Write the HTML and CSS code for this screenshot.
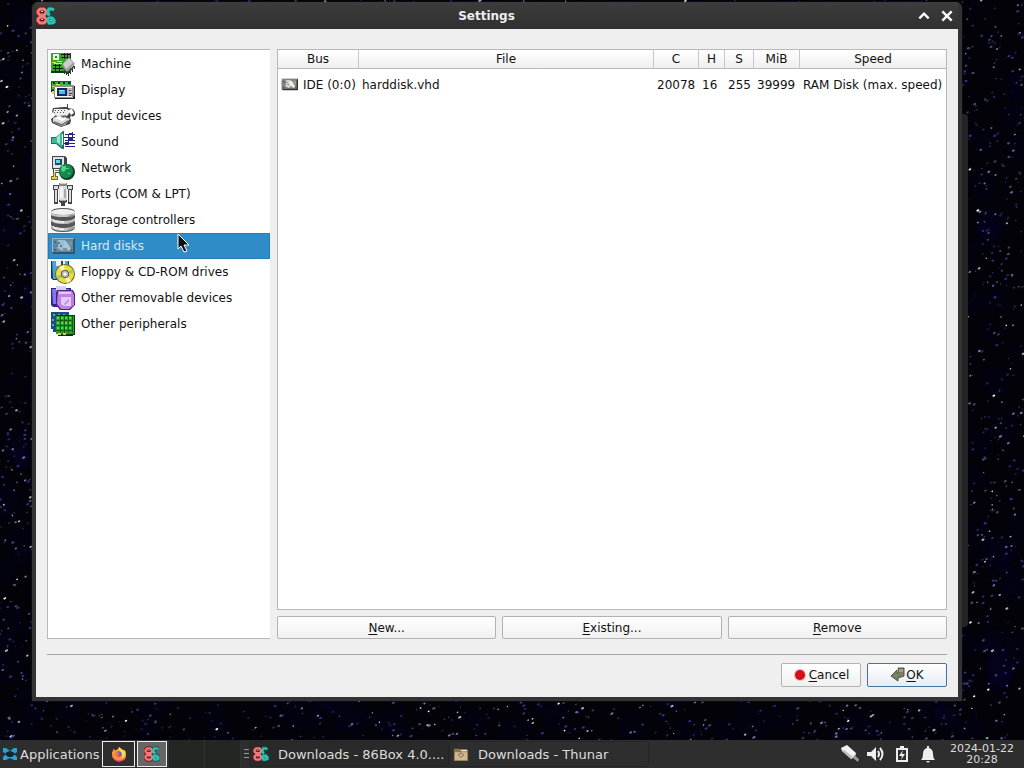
FILE: index.html
```html
<!DOCTYPE html>
<html lang="en">
<head>
  <meta charset="utf-8">
  <title>Settings</title>
  <link rel="stylesheet" href="styles.css">
</head>
<body>
  <!-- Shared icons -->
  <svg class="sprite" aria-hidden="true">
    <symbol id="icon-86box" viewBox="0 0 20 20">
      <g fill="none">
        <g stroke="#6e1218" stroke-width="5"><path d="M4 3h4l2 2v2L8 9H4L2 7V5zM4 11h4l2 2v2l-2 2H4l-2-2v-2z"/></g>
        <g stroke="#0b514e" stroke-width="5"><path d="M18 4l-2-1h-3l-2 2v3l3 1M13 12h3l2 2v2l-2 1h-3l-1-2v-2z"/></g>
        <g stroke="#f27a78" stroke-width="3"><path d="M4 3h4l2 2v2L8 9H4L2 7V5zM4 11h4l2 2v2l-2 2H4l-2-2v-2z"/></g>
        <g stroke="#2cc3b5" stroke-width="3"><path d="M18 4l-2-1h-3l-1 2v3l2 1M13 12h3l2 2v2l-2 1h-3l-1-2v-2z"/></g>
      </g>
      <path fill="#4b1218" d="M5 5h3v2H5zM5 13h3v2H5z"/>
      <path fill="#b5dfb3" d="M5 5h2v1H5zM5 13h2v1H5zM14 14h2v1h-2z"/>
    </symbol>
    <symbol id="icon-disk" viewBox="0 0 24 24">
      <path fill="#333" d="M1 4h23v16H2v-1H1z"/>
      <path fill="#d4d4d4" d="M1 4h22v1H2v13H1z"/>
      <path fill="#858585" d="M2 5h20v13H2z"/>
      <path fill="#555" d="M3 7h2v2H3zM3 15h2v2H3zM19 15h2v2h-2z"/>
      <path fill="#dedede" d="M7 6h7l2 3-1 5-4 3-5-3V9z"/>
      <path fill="#77756a" d="M6 8h3v2H7v3H6zM9 11h2v2H9z"/>
      <path fill="#efefef" d="M13 7l3 1 4 7-2 2-5-4z"/>
      <path fill="#a89e7e" d="M12 14h4v3h-4zM17 7h4v5h-2z"/>
    </symbol>
  </svg>

  <div class="desktop">
    <main class="workspace">
      <canvas class="stars" id="stars"></canvas>
      <div class="back-window"></div>

      <section class="window">
        <header class="titlebar">
          <svg class="title-logo"><use href="#icon-86box"/></svg>
          <h1 class="title">Settings</h1>
          <button class="title-button" aria-label="Shade"><svg viewBox="0 0 12 12"><path d="M2 8l4-4 4 4" fill="none" stroke="#fff" stroke-width="2"/></svg></button>
          <button class="title-button" aria-label="Close"><svg viewBox="0 0 12 12"><path d="M2 2l8 8M10 2l-8 8" fill="none" stroke="#fff" stroke-width="2"/></svg></button>
        </header>

        <div class="window-body">
          <div class="panes">
            <nav class="categories">
              <button class="category">
                <svg viewBox="0 0 24 24"><path fill="#123f10" d="M0 1h20v20H0z"/><path fill="#39a52f" d="M0 1h19v18H0z"/><path fill="#e8f5d8" d="M2 2h6v6H2z"/><path fill="#258a42" d="M4 4h2v2H4z"/><path fill="#102010" d="M10 2h9v1h-9zM10 5h9v1h-9zM13 1h1v6h-1zM16 1h1v6h-1zM2 13h8v1H2zM2 16h10v1H2zM4 12h1v8H4zM8 12h1v8H8z"/><path fill="#e8e430" d="M1 10h4v1H1zM6 9h5v1H6zM3 11h8v1H3z"/><path fill="#333" d="M11 15l1 1 4 5 1-1 6-7v2l-6 7-2-1zM13 18h1v4h-1zM15 20h1v3h-1zM17 20h1v4h-1zM19 18h1v4h-1zM21 16h1v4h-1zM23 14h1v3h-1z"/><path fill="#9b9b9b" d="M11 13l7-8 6 7-8 8z"/><path fill="#cdcdcd" d="M12 12l6-6 4 5-7 6z"/></svg>
                Machine
              </button>
              <button class="category">
                <svg viewBox="0 0 24 24"><path fill="#176622" d="M0 3h20v10H0z"/><path fill="#36b53d" d="M1 4h18v7H1z"/><path fill="#123" d="M2 4h2v2H2zM7 4h2v2H7zM12 4h2v2h-2zM17 4h2v2h-2zM0 12h4v2H0z"/><path fill="#e4df38" d="M1 8h4v1H1zM5 6h4v1H5zM1 13h2v3H1z"/><path fill="#222" d="M4 20h18v-2h1V8h1v13H4z"/><path fill="#909090" d="M3 9l2-2h18v11l-2 2H3z"/><path fill="#fafafa" d="M4 9h17v10H4z"/><path fill="#b8b8b8" d="M6 10h15v8H6z"/><path fill="#112b62" d="M6 10h10v8H6z"/><path fill="#4db9ef" d="M8 12h6v4H8z"/><path fill="#99e8ff" d="M8 12h5v1H8z"/><path fill="#a22" d="M18 12h2v1h-2z"/><path fill="#444" d="M18 15h3v1h-3zM18 17h2v1h-2z"/></svg>
                Display
              </button>
              <button class="category">
                <svg viewBox="0 0 24 24"><path fill="#444" d="M2 4l11-1h3V0h1v4l5 1 2 3v3l-3 2-1-2-1 3 1 2-1 4-9 3-9-4-1-4 5-4-4-3z"/><path fill="#eee" d="M3 5h13l3 3-3 4H6L2 9z"/><path fill="#555" d="M4 6h1v1H4zM7 6h1v1H7zM10 6h1v1h-1zM13 6h1v1h-1zM3 8h1v1H3zM6 8h1v1H6zM9 8h1v1H9zM12 8h1v1h-1z"/><path fill="#ddd" d="M2 14l7-3 10 4-5 6-4 1-8-4z"/><path fill="#fff" d="M4 14l5-2 6 3-4 2zM17 6l4-1 2 4-3 2z"/><path fill="#777" d="M3 17l8 3 6-4v2l-6 4-8-3zM9 12l5-1 2 1-4 2z"/></svg>
                Input devices
              </button>
              <button class="category">
                <svg viewBox="0 0 24 24"><path fill="#246c69" d="M0 7h5l7-6h1v18h-2l-6-5H0z"/><path fill="#3db991" d="M1 8h4l6-6v15l-6-4H1z"/><path fill="#9beacb" d="M2 8h3l4-4v10l-3-2V8z"/><path fill="#fff" d="M11 4h1v11h-1z"/><path fill="#23238b" d="M14 4h10v1H14zM13 7h11v1H13zM14 10h10v1H14zM13 13h11v1H13zM14 16h10v1H14zM17 4h1v9h-1zM18 3h4v2h-4zM21 2h1v8h-1zM14 12h4v3h-4zM18 8h4v3h-4z"/></svg>
                Sound
              </button>
              <button class="category">
                <svg viewBox="0 0 24 24"><path fill="#444" d="M1 0h13l2 2v11h-2v4H2v-4H1z"/><path fill="#e2e2e2" d="M2 1h11v11H2z"/><path fill="#164e64" d="M4 3h7v6H4z"/><path fill="#66d5dd" d="M5 4h4v3H5z"/><path fill="#f7f7f7" d="M3 13h11v3H3z"/><path fill="#777" d="M4 14h7v1H4z"/><path fill="#77712b" d="M2 16h3v4h2v4H0v-4h2z"/><path fill="#dcd455" d="M3 16h1v5h2v2H1v-2h2z"/><circle cx="16" cy="16" r="8" fill="#113f26"/><circle cx="15" cy="15" r="7" fill="#168a4e"/><path fill="#51d389" d="M11 10h4v2h3v1h-3l-1 2-2 1-2-2zM17 17h2v1h-2z"/></svg>
                Network
              </button>
              <button class="category">
                <svg viewBox="0 0 24 24"><path fill="#444" d="M2 3h20v5h-1v14h-4V7h-1v13l-2 1v3h-4v-3l-2-1V7H7v15H3V8H2z"/><path fill="#ddd" d="M3 4h4v3H3zM17 4h4v3h-4zM4 8h2v12H4zM18 8h2v12h-2zM8 4h8v14H8z"/><path fill="#888" d="M8 1h8v3H8z"/><path fill="#e2d863" d="M9 1h6v1H9z"/><path fill="#f4f4f4" d="M9 5h3v11H9z"/><path fill="#a8a8a8" d="M13 7h2v9h-2zM9 18h6v1H9z"/></svg>
                Ports (COM &amp; LPT)
              </button>
              <button class="category">
                <svg viewBox="0 0 24 24"><path fill="#555" d="M0 4q0-4 12-4t12 4v15q0 5-12 5T0 19z"/><path fill="#c6c6c6" d="M0 4v3q3 2 12 2t12-2V4q-2 3-12 3T0 4zM0 10v3q3 3 12 3t12-3v-3q-3 3-12 3T0 10zM0 17v2q3 4 12 4t12-4v-2q-3 3-12 3T0 17z"/><ellipse cx="12" cy="4" rx="12" ry="3" fill="#f1f1f1"/><path fill="#e8e8e8" d="M2 11q4 2 11 2v2q-8 0-11-2zM2 18q4 2 11 2v2q-8 0-11-2z"/><path fill="#909090" d="M17 8l6-2v2l-6 1zM17 15l6-2v1l-6 2zM17 21l6-2v1l-6 2z"/></svg>
                Storage controllers
              </button>
              <button class="category selected">
                <svg class="tinted"><use href="#icon-disk"/></svg>
                Hard disks
              </button>
              <button class="category">
                <svg viewBox="0 0 24 24"><path fill="#17365b" d="M0 1h18v19H2l-2-2z"/><path fill="#4aa2db" d="M1 1h16v18H2z"/><path fill="#eee" d="M5 0h9v6H5z"/><path fill="#345" d="M10 1h2v4h-2z"/><circle cx="14" cy="14" r="10" fill="#6c681e"/><circle cx="14" cy="14" r="9" fill="#eadd42"/><path fill="#fff8be" d="M14 14l-6-7 5-2zM14 14l6 7-4 2z"/><path fill="#a7c95b" d="M14 14l-9 2 2 4zM14 14l8-5 1 4z"/><circle cx="14" cy="14" r="4" fill="#555"/><circle cx="14" cy="14" r="3" fill="#ccc"/><path fill="#fff" d="M13 13h2v2h-2z"/></svg>
                Floppy &amp; CD-ROM drives
              </button>
              <button class="category">
                <svg viewBox="0 0 24 24"><path fill="#32209b" d="M0 2h20v19H2l-2-2z"/><path fill="#7d77f2" d="M1 3h17v15H2z"/><path fill="#d5d5f3" d="M5 0h10v6H5z"/><path fill="#51246d" d="M6 4h16l2 4v11l-5 5H9l-4-5V6z"/><path fill="#bd82e5" d="M7 5h14l2 4v10l-5 4h-8l-4-5z"/><path fill="#e8c6fa" d="M8 6h12v2H8zM10 11h10v9h-7l-3-2z"/><path fill="#b583dc" d="M13 18l5-5v2l-4 4zM20 9h2v9h-2z"/></svg>
                Other removable devices
              </button>
              <button class="category">
                <svg viewBox="0 0 24 24"><path fill="#1b4e7d" d="M0 0h18v20H2v-3H0z"/><path fill="#62a0bd" d="M2 2h2v2H2zM7 2h2v2H7zM12 2h2v2h-2zM1 7h2v2H1zM1 12h2v2H1z"/><path fill="#102f0d" d="M5 3h19v20h-2v1H7v-2H5z"/><path fill="#24a326" d="M5 4h18v18H5z"/><path fill="#5fd44a" d="M6 5h2v2H6zM10 5h2v2h-2zM14 5h2v2h-2zM18 5h2v2h-2zM6 10h2v2H6zM10 10h2v2h-2zM14 10h2v2h-2zM18 10h2v2h-2zM6 15h2v2H6zM10 15h2v2h-2zM14 15h2v2h-2zM18 15h2v2h-2z"/><path fill="#145c17" d="M5 8h17v1H5zM5 13h17v1H5zM5 18h17v1H5zM9 4h1v17H9zM13 4h1v17h-1zM17 4h1v17h-1zM21 4h1v17h-1z"/><path fill="#d7d53c" d="M7 21h3v2H7zM12 21h3v2h-3z"/></svg>
                Other peripherals
              </button>
            </nav>

            <div class="details">
              <div class="disk-view">
                <table class="disk-table">
                  <colgroup>
                    <col class="col-bus"><col><col class="col-c"><col class="col-h"><col class="col-s"><col class="col-mib"><col class="col-speed">
                  </colgroup>
                  <thead>
                    <tr><th>Bus</th><th>File</th><th>C</th><th>H</th><th>S</th><th>MiB</th><th>Speed</th></tr>
                  </thead>
                  <tbody>
                    <tr>
                      <td><span class="bus"><svg class="bus-icon"><use href="#icon-disk"/></svg>IDE (0:0)</span></td>
                      <td>harddisk.vhd</td>
                      <td>20078</td>
                      <td>16</td>
                      <td>255</td>
                      <td>39999</td>
                      <td>RAM Disk (max. speed)</td>
                    </tr>
                  </tbody>
                </table>
              </div>
              <div class="actions">
                <button class="button"><span><u>N</u>ew...</span></button>
                <button class="button"><span><u>E</u>xisting...</span></button>
                <button class="button"><span><u>R</u>emove</span></button>
              </div>
            </div>
          </div>

          <footer class="dialog-buttons">
            <button class="button"><svg class="cancel-icon" viewBox="0 0 14 14"><circle cx="7" cy="7" r="6" fill="#f4b5b5"/><circle cx="7" cy="7" r="5" fill="#d40f17"/></svg><span><u>C</u>ancel</span></button>
            <button class="button default"><svg class="ok-icon" viewBox="0 0 16 16"><path d="M8 1h6v8l-6 2v3L1 9l6-6v3h2z" fill="#7c8063" stroke="#4d523e"/><path d="M9 2h4v3H9z" fill="#a1a589"/></svg><span><u>O</u>K</span></button>
          </footer>
        </div>
      </section>

      <svg class="pointer" viewBox="0 0 12 20"><path d="M1 1v15l3-3 3 6 3-1-3-6h5z" fill="#111" stroke="#fff"/></svg>
    </main>

    <footer class="taskbar">
      <button class="menu-button">
        <svg viewBox="0 0 16 16"><path fill="#2d9fd0" d="M1 2h3l4 3 4-3h3v4l-3 2 3 3v3h-3l-4-2-4 2H1v-3l3-3-3-2z"/><path fill="#10252e" d="M5 6l3-1 3 1 2 2-3 3H6L3 8z"/></svg>
        Applications
      </button>
      <button class="launcher" aria-label="Firefox"><svg viewBox="0 0 18 18"><path d="M1 8L3 3l2 2 3-2 1-2 4 3 3 1 1 5q0 7-8 7T1 8z" fill="#ff9a32"/><path d="M1 8q1 8 8 8 6 0 8-5-1 6-8 7Q1 17 1 8z" fill="#f6436b"/><path d="M9 1l4 4 3 1q1 7-4 8 2-4-1-7Q8 5 9 1z" fill="#ffde52"/><circle cx="9" cy="9" r="3" fill="#7059c9"/><path d="M4 8l4-1 2 2-3 1 3 3q-5 1-6-5z" fill="#ff7241"/></svg></button>
      <button class="launcher active" aria-label="86Box"><svg><use href="#icon-86box"/></svg></button>
      <div class="pager"><span></span><span></span></div>
      <div class="handle"></div>
      <button class="task current"><svg><use href="#icon-86box"/></svg><span>Downloads - 86Box 4.0....</span></button>
      <button class="task"><svg viewBox="0 0 18 18"><path fill="#8f7452" d="M1 3h7l2 2h7v12H1z"/><path fill="#d2b88f" d="M2 7h14v9H2z"/><path fill="#eee2c8" d="M9 4h7v2H9z"/><path d="M6 10l3-2 3 2-3 3z" fill="none" stroke="#725d43"/></svg><span>Downloads - Thunar</span></button>
      <div class="tray">
        <svg viewBox="0 0 20 20"><path fill="#f3f3ef" d="M1 4l6-3 9 8-1 4-4 2-9-8z"/><path fill="#999" d="M14 11l5 4-1 3-5-4z"/><path fill="#bbb" d="M2 7l2-1 9 7-2 2z"/></svg>
        <svg viewBox="0 0 20 20"><path fill="#eee" d="M1 8h4l5-5v14l-5-5H1z"/><path fill="none" stroke="#eee" stroke-width="2" d="M12 7q2 3 0 6M14 4q5 6 0 12"/></svg>
        <svg viewBox="0 0 20 20"><path fill="none" stroke="#eee" stroke-width="2" d="M5 5h10v12H5z"/><path fill="#eee" d="M8 2h4v3H8zM11 6l-4 6h3l-1 4 4-6h-3z"/></svg>
        <svg viewBox="0 0 20 20"><path fill="#eee" d="M9 2h2v2q4 1 4 6 0 4 2 6H3q2-2 2-6 0-5 4-6zM8 17h4l-2 2z"/></svg>
      </div>
      <time class="clock">2024-01-22<br>20:28</time>
    </footer>
  </div>
  <script src="stars.js"></script>
</body>
</html>
```
FILE: styles.css
```css
* {
  box-sizing: border-box;
}

body {
  margin: 0;
  font-family: 'DejaVu Sans', sans-serif;
  font-size: 12px;
  color: #111;
  background: #000;
}

button {
  font: inherit;
  color: inherit;
  padding: 0;
  border: 0;
  background: none;
}

svg {
  flex: none;
}

.sprite {
  position: absolute;
  width: 0;
  height: 0;
}

.desktop {
  display: flex;
  flex-direction: column;
  height: 100vh;
  overflow: hidden;
}

.workspace {
  position: relative;
  flex: 1;
  display: flex;
  min-height: 0;
  padding: 2px 62px 39px 32px;
}

.stars {
  position: absolute;
  left: 0;
  top: 0;
  width: 100%;
  height: 100%;
}

/* edge of the window underneath */
.back-window {
  position: absolute;
  right: 56px;
  top: 114px;
  bottom: 113px;
  width: 20px;
  background: #242424;
  border-radius: 4px;
}

/* Settings window */
.window {
  position: relative;
  flex: 1;
  display: flex;
  flex-direction: column;
  padding: 0 4px 4px;
  background: #333;
  border-radius: 6px 6px 0 0;
  box-shadow: 0 0 2px #222;
}

.titlebar {
  display: flex;
  align-items: center;
  gap: 9px;
  height: 27px;
  padding-right: 4px;
  background: linear-gradient(#3d3d3d, #303030);
}

.title-logo {
  width: 20px;
  height: 20px;
}

.title {
  flex: 1;
  margin: 0;
  font-size: 12px;
  color: #eee;
  text-align: center;
}

.title-button {
  display: flex;
}

.title-button svg {
  width: 14px;
  height: 14px;
}

.window-body {
  flex: 1;
  display: flex;
  flex-direction: column;
  min-height: 0;
  padding: 20px 11px 10px;
  background: #efefef;
}

.panes {
  flex: 1;
  display: flex;
  gap: 7px;
  min-height: 0;
}

.categories {
  width: 223px;
  padding-top: 1px;
  background: #fff;
  border: 1px solid #b9b9b9;
  border-right: 0;
}

.category {
  display: flex;
  align-items: center;
  gap: 6px;
  width: 100%;
  height: 26px;
  padding-left: 3px;
}

.category svg {
  width: 24px;
  height: 24px;
}

.category.selected {
  background: #308cc6;
  color: #d5eaf6;
  box-shadow: inset 0 0 0 1px #247fb8;
}

.tinted {
  opacity: 0.6;
}

.details {
  flex: 1;
  display: flex;
  flex-direction: column;
  gap: 6px;
}

.disk-view {
  flex: 1;
  background: #fff;
  border: 1px solid #b9b9b9;
}

.disk-table {
  width: 100%;
  table-layout: fixed;
  border-collapse: separate;
  border-spacing: 0;
  white-space: nowrap;
}

.col-bus { width: 81px; }
.col-c { width: 45px; }
.col-h { width: 26px; }
.col-s { width: 29px; }
.col-mib { width: 46px; }
.col-speed { width: 146px; }

.disk-table th {
  height: 19px;
  padding: 0;
  font-weight: normal;
  line-height: 18px;
  background: linear-gradient(#fff, #efefef);
  border-right: 1px solid #c8c8c8;
  border-bottom: 1px solid #b9b9b9;
}

.disk-table th:last-child {
  border-right: 0;
}

.disk-table td {
  height: 31px;
  padding: 0 3px;
}

.bus {
  display: flex;
  align-items: center;
  gap: 5px;
}

.bus-icon {
  width: 17px;
  height: 17px;
}

.actions {
  display: grid;
  grid-template-columns: repeat(3, 1fr);
  gap: 6px;
}

.button {
  display: flex;
  align-items: center;
  justify-content: center;
  height: 23px;
  background: linear-gradient(#fff, #f0f0f0);
  border: 1px solid #b2b2b2;
  border-radius: 2px;
}

.button u {
  text-underline-offset: 2px;
}

.dialog-buttons {
  display: flex;
  justify-content: flex-end;
  gap: 6px;
  margin-top: 15px;
  padding-top: 8px;
  border-top: 1px solid #a5a5a5;
}

.dialog-buttons .button {
  gap: 2px;
  width: 80px;
  height: 24px;
}

.dialog-buttons .default {
  gap: 0;
  background: linear-gradient(#fff, #e6edf4);
  border-color: #47739a;
}

.cancel-icon {
  width: 14px;
  height: 14px;
}

.ok-icon {
  width: 16px;
  height: 16px;
}

.pointer {
  position: absolute;
  left: 177px;
  top: 233px;
  width: 12px;
  height: 20px;
}

/* Bottom panel */
.taskbar {
  display: flex;
  align-items: center;
  height: 28px;
  font-size: 13px;
  color: #ddd;
  background: #2d2e2d;
}

.menu-button {
  display: flex;
  align-items: center;
  gap: 2px;
  width: 102px;
  padding-left: 2px;
}

.menu-button svg {
  width: 16px;
  height: 16px;
}

.launcher {
  display: flex;
  align-items: center;
  justify-content: center;
  width: 33px;
  height: 26px;
  margin-right: 2px;
  border: 1px solid #eee;
}

.launcher svg {
  width: 16px;
  height: 16px;
}

.launcher.active {
  width: 30px;
  background: #666;
}

.pager {
  display: flex;
  width: 73px;
  height: 100%;
}

.pager span {
  width: 36px;
  background: #242624;
  border-right: 1px solid #313331;
}

.handle {
  width: 5px;
  height: 10px;
  margin-left: 2px;
  background: repeating-linear-gradient(#999 0 1px, transparent 1px 4px);
}

.task {
  display: flex;
  align-items: center;
  gap: 9px;
  width: 200px;
  height: 26px;
  padding-left: 3px;
  white-space: nowrap;
  border: 1px solid #252625;
  border-radius: 3px;
}

.task svg {
  width: 16px;
  height: 16px;
}

.task.current {
  background: #292a29;
}

.tray {
  display: flex;
  gap: 6px;
  margin-left: auto;
}

.tray svg {
  width: 20px;
  height: 20px;
}

.clock {
  width: 86px;
  padding-left: 2px;
  font-size: 11px;
  line-height: 11px;
  text-align: center;
}
```
FILE: stars.js
```javascript
const canvas = document.getElementById("stars");
const ctx = canvas.getContext("2d");
let seed = 86;

function random() {
  seed = (seed * 16807) % 2147483647;
  return seed / 2147483647;
}

function drawStars() {
  const w = canvas.width = canvas.clientWidth;
  const h = canvas.height = canvas.clientHeight;
  seed = 86;
  ctx.fillStyle = "#020208";
  ctx.fillRect(0, 0, w, h);

  // faint blue dust
  for (let i = 0; i < w * h / 700; i++) {
    const x = random() * w;
    const y = random() * h;
    const r = 4 + random() * 14;
    ctx.fillStyle = "rgba(15, 12, 75, 0.09)";
    ctx.beginPath();
    ctx.arc(x, y, r, 0, Math.PI * 2);
    ctx.fill();
  }

  const colors = ["#22204e", "#35318c", "#484a5c", "#7471a8", "#a9acb6", "#eef2f8"];
  for (let i = 0; i < w * h / 110; i++) {
    const size = random();
    ctx.fillStyle = colors[Math.floor(random() * Math.sqrt(random()) * colors.length)];
    ctx.beginPath();
    ctx.ellipse(random() * w, random() * h, 0.6 + size * 1.2, 0.6 + size * 0.5, -0.5, 0, Math.PI * 2);
    ctx.fill();
  }
}

drawStars();
window.addEventListener("resize", drawStars);
```
